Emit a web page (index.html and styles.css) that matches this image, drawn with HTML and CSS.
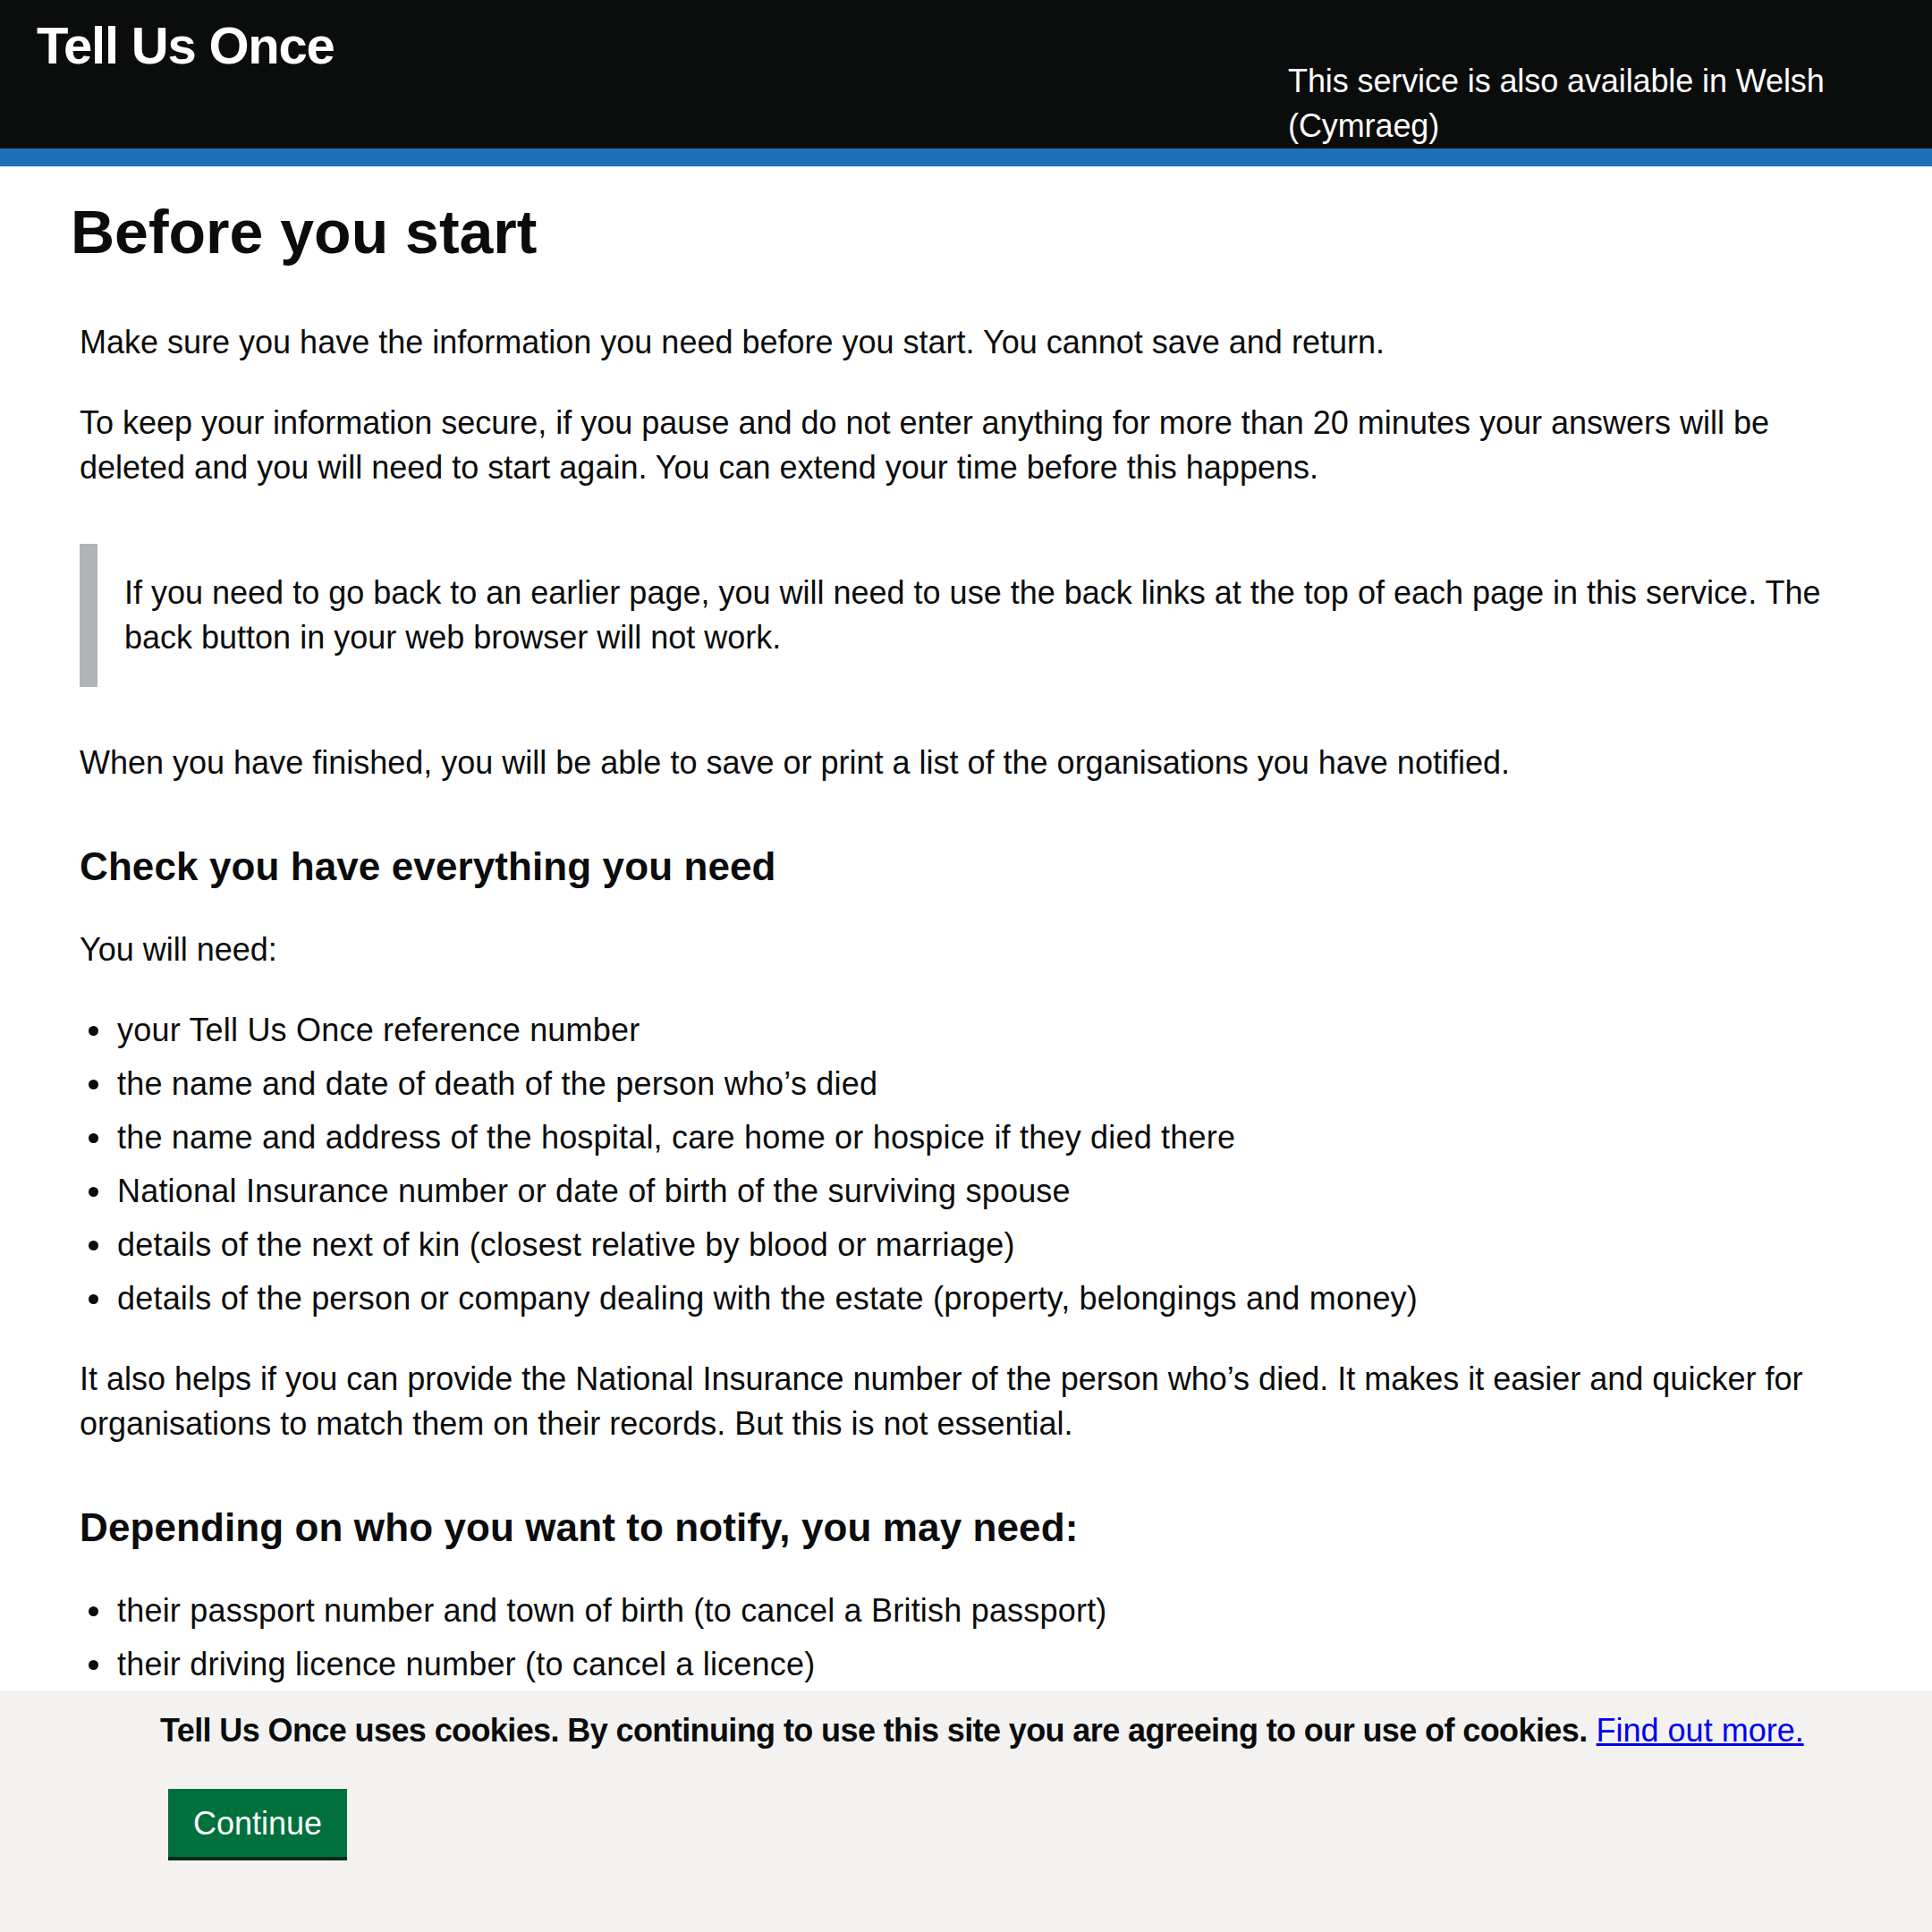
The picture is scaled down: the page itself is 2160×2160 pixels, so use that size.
FILE: index.html
```html
<!DOCTYPE html>
<html lang="en">
<head>
<meta charset="utf-8">
<title>Before you start - Tell Us Once</title>
<link rel="stylesheet" href="styles.css">
</head>
<body>
<header class="site-header">
  <div class="header-inner">
    <a class="logo" href="#">Tell Us Once</a>
    <div class="lang-note">This service is also available in Welsh (Cymraeg)</div>
  </div>
</header>
<main class="main">
  <h1 class="page-title">Before you start</h1>
  <p class="body">Make sure you have the information you need before you start. You cannot save and return.</p>
  <p class="body">To keep your information secure, if you pause and do not enter anything for more than 20 minutes your answers will be deleted and you will need to start again. You can extend your time before this happens.</p>
  <div class="inset">If you need to go back to an earlier page, you will need to use the back links at the top of each page in this service. The back button in your web browser will not work.</div>
  <p class="body">When you have finished, you will be able to save or print a list of the organisations you have notified.</p>
  <h2 class="heading">Check you have everything you need</h2>
  <p class="body">You will need:</p>
  <ul class="bullets">
    <li>your Tell Us Once reference number</li>
    <li>the name and date of death of the person who’s died</li>
    <li>the name and address of the hospital, care home or hospice if they died there</li>
    <li>National Insurance number or date of birth of the surviving spouse</li>
    <li>details of the next of kin (closest relative by blood or marriage)</li>
    <li>details of the person or company dealing with the estate (property, belongings and money)</li>
  </ul>
  <p class="body">It also helps if you can provide the National Insurance number of the person who’s died. It makes it easier and quicker for organisations to match them on their records. But this is not essential.</p>
  <h2 class="heading">Depending on who you want to notify, you may need:</h2>
  <ul class="bullets">
    <li>their passport number and town of birth (to cancel a British passport)</li>
    <li>their driving licence number (to cancel a licence)</li>
  </ul>
</main>
<div class="cookie-banner">
  <p class="cookie-text"><span class="cookie-strong">Tell Us Once uses cookies. By continuing to use this site you are agreeing to our use of cookies.</span> <a class="cookie-link" href="#">Find out more.</a></p>
  <button class="button" type="button">Continue</button>
</div>
</body>
</html>
```

FILE: styles.css
```css
html, body {
  margin: 0;
  padding: 0;
  background: #ffffff;
}
body {
  font-family: "Liberation Sans", Arial, sans-serif;
  color: #0b0c0c;
  font-size: 36px;
  line-height: 50px;
}
.site-header {
  background: #0b0c0c;
  border-bottom: 20px solid #1d70b8;
}
.header-inner {
  display: flex;
  justify-content: space-between;
  align-items: flex-start;
  padding: 0 40px 0 41px;
}
.logo {
  color: #ffffff;
  text-decoration: none;
  font-weight: 700;
  font-size: 58px;
  line-height: 58px;
  letter-spacing: -1.2px;
  padding-top: 22px;
}
.lang-note {
  width: 680px;
  color: #ffffff;
  padding-top: 66px;
  letter-spacing: -0.1px;
}
.main {
  padding: 33px 91px 0 89px;
}
.page-title {
  margin: 0 0 59px -10px;
  font-size: 68px;
  line-height: 80px;
  font-weight: 700;
}
.body {
  margin: 0 0 40px;
}
.inset {
  margin: 60px 0;
  padding: 30px 0 30px 30px;
  border-left: 20px solid #b1b4b6;
}
.heading {
  margin: 61px 0 38px;
  font-size: 44px;
  line-height: 60px;
  font-weight: 700;
  letter-spacing: 0.1px;
}
.bullets {
  margin: 0 0 40px;
  padding: 0;
  list-style: none;
}
.bullets li {
  display: flex;
  margin-bottom: 10px;
  letter-spacing: 0.2px;
}
.bullets li::before {
  content: "";
  flex: none;
  width: 11px;
  height: 11px;
  border-radius: 50%;
  background: #0b0c0c;
  margin: 20px 21px 0 10px;
}
.cookie-banner {
  position: fixed;
  left: 0;
  right: 0;
  bottom: 0;
  background: #f3f2f1;
  padding: 20px 20px 84px 179px;
}
.cookie-text {
  margin: 0;
  white-space: nowrap;
}
.cookie-strong {
  font-weight: 700;
  letter-spacing: -0.6px;
}
.cookie-link {
  font-weight: 400;
  color: #0000ee;
  text-decoration: underline;
}
.button {
  display: block;
  margin: 40px 0 0 9px;
  padding: 16px 28px 15px;
  border: 0;
  border-radius: 0;
  background: #00703c;
  box-shadow: 0 4px 0 #002d18;
  color: #ffffff;
  font-family: "Liberation Sans", Arial, sans-serif;
  font-size: 36px;
  line-height: 45px;
  cursor: pointer;
}
```
